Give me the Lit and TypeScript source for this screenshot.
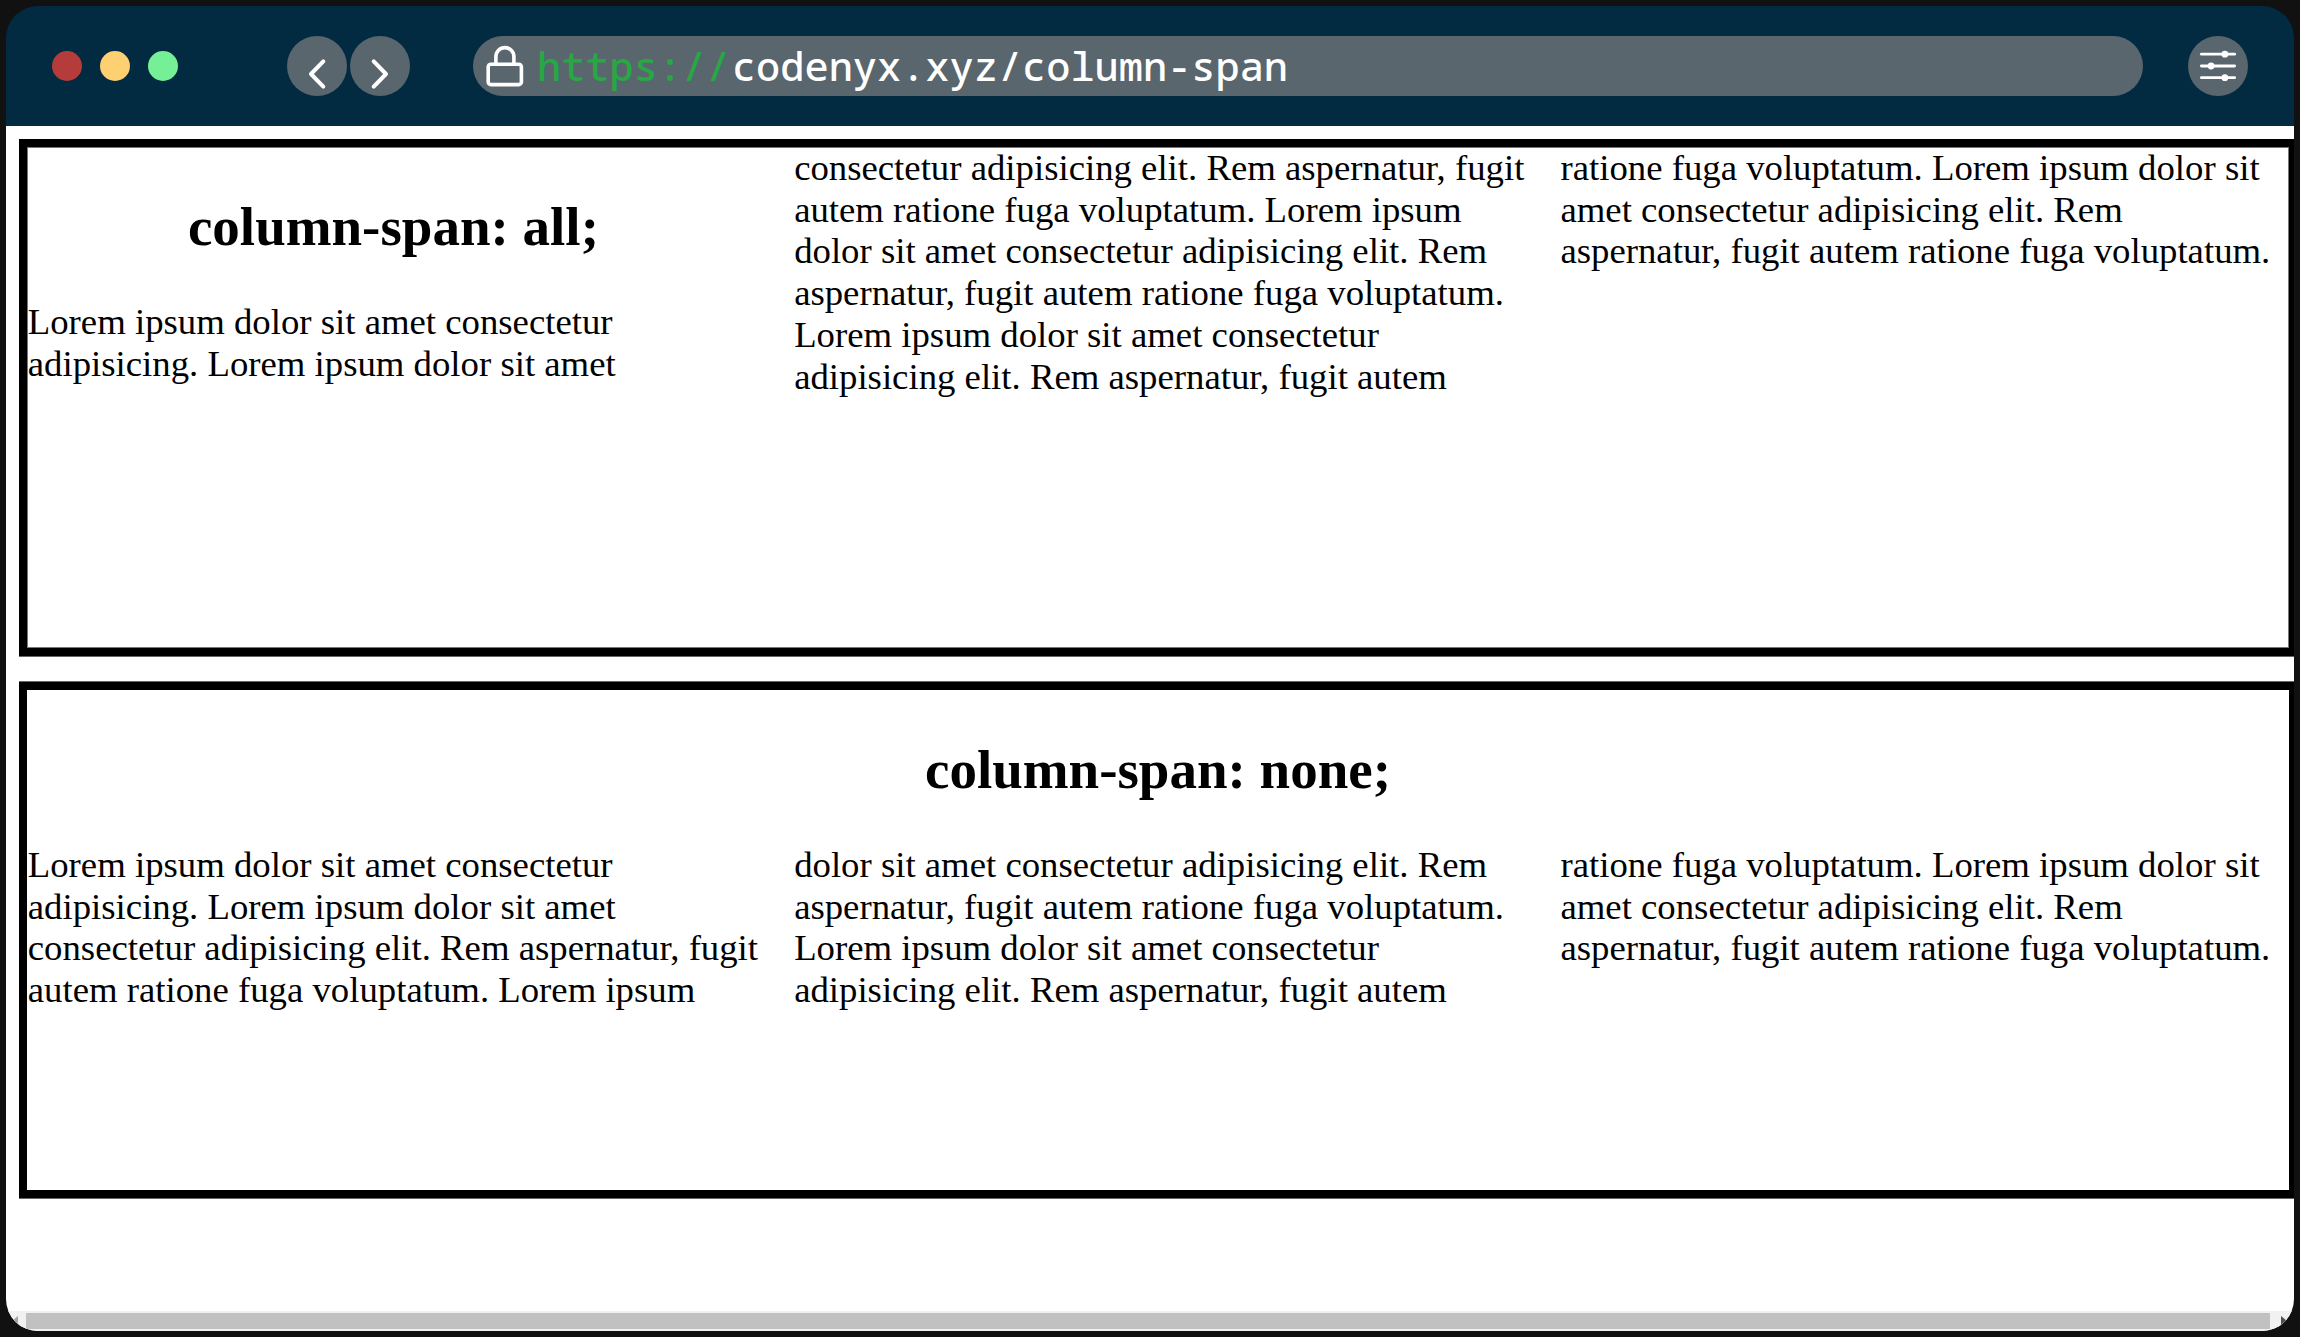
import { LitElement, html, svg, css } from "lit";
import { customElement, property } from "lit/decorators.js";

const ALL_COLUMNS = [
  "Lorem ipsum dolor sit amet consectetur adipisicing. Lorem ipsum dolor sit amet",
  "consectetur adipisicing elit. Rem aspernatur, fugit autem ratione fuga voluptatum. Lorem ipsum dolor sit amet consectetur adipisicing elit. Rem aspernatur, fugit autem ratione fuga voluptatum. Lorem ipsum dolor sit amet consectetur adipisicing elit. Rem aspernatur, fugit autem",
  "ratione fuga voluptatum. Lorem ipsum dolor sit amet consectetur adipisicing elit. Rem aspernatur, fugit autem ratione fuga voluptatum.",
];

const NONE_COLUMNS = [
  "Lorem ipsum dolor sit amet consectetur adipisicing. Lorem ipsum dolor sit amet consectetur adipisicing elit. Rem aspernatur, fugit autem ratione fuga voluptatum. Lorem ipsum",
  "dolor sit amet consectetur adipisicing elit. Rem aspernatur, fugit autem ratione fuga voluptatum. Lorem ipsum dolor sit amet consectetur adipisicing elit. Rem aspernatur, fugit autem",
  "ratione fuga voluptatum. Lorem ipsum dolor sit amet consectetur adipisicing elit. Rem aspernatur, fugit autem ratione fuga voluptatum.",
];

const chevron = (points: string) => html`
  <svg class="icon" viewBox="0 0 60 60" aria-hidden="true">
    <polyline points=${points} fill="none" stroke="#fff" stroke-width="4" stroke-linecap="round" stroke-linejoin="round" />
  </svg>
`;

const SLIDERS = [
  { y: 18.2, knob: 36.9 },
  { y: 30, knob: 23.1 },
  { y: 41.7, knob: 36.9 },
];

@customElement("browser-bar")
export class BrowserBar extends LitElement {
  static styles = css`
    :host {
      display: flex;
      align-items: center;
      box-sizing: border-box;
      height: 120px;
      padding: 0 46px;
      border-radius: 32px 32px 0 0;
      background: #022b41;
    }
    .dots {
      display: flex;
      gap: 18px;
    }
    .dot {
      width: 30px;
      height: 30px;
      border-radius: 50%;
    }
    .red { background: #b63c3b; }
    .yellow { background: #ffd071; }
    .green { background: #76f097; }
    .nav {
      display: flex;
      gap: 3px;
      margin-left: 109px;
    }
    .round {
      width: 60px;
      height: 60px;
      border-radius: 50%;
      background: #59666e;
    }
    .icon {
      display: block;
      width: 60px;
      height: 60px;
    }
    .address {
      display: flex;
      align-items: center;
      flex: 1;
      height: 60px;
      margin: 0 45px 0 63px;
      border-radius: 30px;
      background: #59666e;
      color: #fff;
      font: 500 40.3px/60px "Noto Sans Mono", "DejaVu Sans Mono", monospace;
      white-space: pre;
    }
    .lock {
      flex: none;
      width: 64px;
      height: 60px;
    }
    .scheme {
      margin-right: 1.5px;
      color: #28a745;
    }
  `;

  render() {
    return html`
      <div class="dots">
        <div class="dot red"></div>
        <div class="dot yellow"></div>
        <div class="dot green"></div>
      </div>
      <div class="nav">
        <div class="round">${chevron("36.3,25.4 24,38 36.3,50.6")}</div>
        <div class="round">${chevron("23.7,25.4 36,38 23.7,50.6")}</div>
      </div>
      <div class="address">
        <svg class="lock" viewBox="0 0 64 60" fill="none" stroke="#fff" stroke-width="3.6" aria-hidden="true">
          <rect x="15.2" y="28.2" width="33.2" height="20.4" rx="2.6" />
          <path d="M22.9 28V20.6a9 9 0 0 1 18 0V28" />
        </svg>
        <span class="scheme">https://</span><span>codenyx.xyz/column-span</span>
      </div>
      <div class="round">
        <svg class="icon" viewBox="0 0 60 60" aria-hidden="true">
          ${SLIDERS.map(
            ({ y, knob }) => svg`
              <line x1="13.4" x2="46.6" y1=${y} y2=${y} stroke="#fff" stroke-width="2.8" stroke-linecap="round" />
              <circle cx=${knob} cy=${y} r="3.4" fill="#fff" />`,
          )}
        </svg>
      </div>
    `;
  }
}

@customElement("column-demo")
export class ColumnDemo extends LitElement {
  @property() heading = "";
  @property({ type: Boolean }) spanning = false;
  @property({ attribute: false }) blocks: string[] = [];

  static styles = css`
    :host {
      display: block;
      box-sizing: border-box;
      width: 2278px;
      height: 517px;
      border: 8px solid #000;
      box-shadow: inset 0 0 0 1px #777, 0 1px 0 #666;
      color: #000;
      font: 36.75px/41.7px "Liberation Serif", "Times New Roman", serif;
    }
    :host([spanning]) {
      height: 516px;
      box-shadow: 0 1px 0 #666, 0 -1px 0 #666;
    }
    .columns {
      width: 2264px;
      height: 251px;
      padding-left: 0.8px;
      columns: 3;
      column-gap: 35px;
      column-fill: auto;
    }
    .columns.short {
      height: 167px;
    }
    .title {
      margin: 0;
      padding: 48.5px 0 43px;
      font-size: 55px;
      font-weight: 700;
      line-height: 62.5px;
      text-align: center;
    }
    .text {
      margin: 0;
    }
    .text + .text {
      break-before: column;
    }
  `;

  render() {
    const title = html`<h2 class="title">${this.heading}</h2>`;
    const text = this.blocks.map((block) => html`<p class="text">${block}</p>`);
    return this.spanning
      ? html`${title}<div class="columns short">${text}</div>`
      : html`<div class="columns">${title}${text}</div>`;
  }
}

@customElement("app-root")
export class AppRoot extends LitElement {
  static styles = css`
    :host {
      display: block;
      box-sizing: border-box;
      height: 1337px;
      padding: 6px;
      background: #111;
    }
    .window {
      display: flex;
      flex-direction: column;
      height: 1325px;
    }
    browser-bar {
      flex: none;
    }
    .body {
      display: flex;
      flex: 1;
      flex-direction: column;
      min-height: 0;
      border-radius: 0 0 32px 32px;
      overflow: hidden;
      background: #fff;
    }
    .page {
      display: flex;
      flex: 1;
      flex-direction: column;
      gap: 26px;
      min-height: 0;
      padding: 13px 0 0 13px;
      overflow: hidden;
    }
    .demo {
      flex: none;
    }
    .scrollbar {
      display: flex;
      align-items: center;
      justify-content: space-between;
      flex: none;
      height: 20px;
      padding: 0 7px 0 6px;
      background: #f1f1f1;
    }
    .thumb {
      flex: 1;
      height: 16px;
      margin: 0 11px 0 8px;
      background: #c1c1c1;
    }
    .arrow {
      display: block;
      width: 6px;
      height: 10px;
    }
  `;

  render() {
    return html`
      <div class="window">
        <browser-bar></browser-bar>
        <div class="body">
          <div class="page">
            <column-demo class="demo" heading="column-span: all;" .blocks=${ALL_COLUMNS}></column-demo>
            <column-demo class="demo" heading="column-span: none;" spanning .blocks=${NONE_COLUMNS}></column-demo>
          </div>
          <div class="scrollbar">
            <svg class="arrow" viewBox="0 0 6 10"><path d="M6 0V10L0 5z" fill="#a3a3a3" /></svg>
            <div class="thumb"></div>
            <svg class="arrow" viewBox="0 0 6 10"><path d="M0 0V10L6 5z" fill="#505050" /></svg>
          </div>
        </div>
      </div>
    `;
  }
}
